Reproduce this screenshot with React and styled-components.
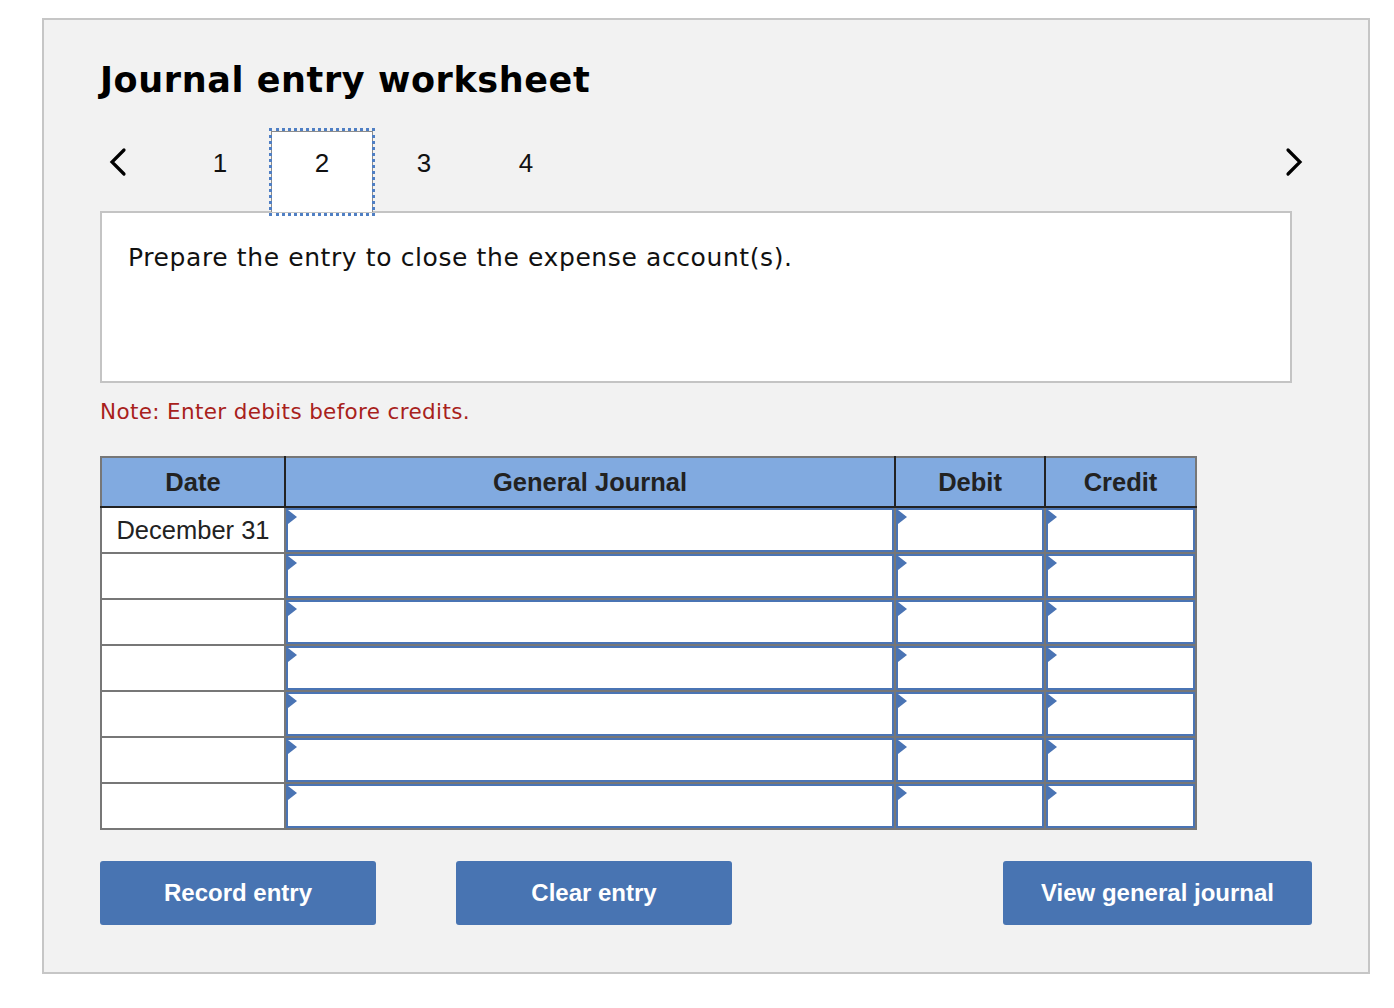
import React from 'react';
import styled, { createGlobalStyle } from 'styled-components';

const GlobalStyle = createGlobalStyle`
  html, body {
    margin: 0;
    padding: 0;
    background: #ffffff;
  }
  body {
    font-family: "DejaVu Sans", Verdana, sans-serif;
  }
`;

const Page = styled.div`
  padding: 18px 0 0 42px;
`;

const Panel = styled.div`
  width: 1328px;
  height: 956px;
  box-sizing: border-box;
  background: #f2f2f2;
  border: 2px solid #c6c6c6;
  padding: 38px 0 0 56px;
`;

const Title = styled.h1`
  margin: 0;
  font-family: "DejaVu Sans", Verdana, sans-serif;
  font-weight: bold;
  font-size: 35px;
  line-height: 44px;
  color: #000;
  letter-spacing: 0.6px;
`;

const TabBar = styled.div`
  display: flex;
  align-items: flex-end;
  width: 1212px;
  height: 82px;
  margin-top: 27px;
`;

const Arrow = styled.button`
  border: none;
  background: none;
  padding: 0 0 18px;
  width: 36px;
  height: 80px;
  display: flex;
  align-items: center;
  justify-content: center;
  margin-left: ${(p) => (p.$right ? 'auto' : '0')};
  cursor: pointer;
`;

const Tabs = styled.div`
  display: flex;
  margin-left: 33px;
`;

const Tab = styled.div`
  position: relative;
  width: 102px;
  height: 81px;
  box-sizing: border-box;
  display: flex;
  align-items: center;
  justify-content: center;
  font-family: "Liberation Sans", Arial, sans-serif;
  font-size: 26px;
  color: #111;
  background: ${(p) => (p.$active ? '#ffffff' : 'transparent')};
  border: 1px solid ${(p) => (p.$active ? '#8c8c8c' : 'transparent')};
  border-bottom: none;
  margin-bottom: -1px;
  padding-bottom: 18px;
  z-index: 1;
  &::after {
    content: '';
    display: ${(p) => (p.$active ? 'block' : 'none')};
    position: absolute;
    left: -3px;
    right: -3px;
    top: -4px;
    bottom: -4px;
    border: 3px dotted #4f7fc4;
  }
`;

const Prompt = styled.div`
  width: 1192px;
  height: 172px;
  box-sizing: border-box;
  background: #fff;
  border: 2px solid #c4c4c4;
  padding: 28px 26px;
  font-size: 25px;
  letter-spacing: 0.6px;
  color: #111;
  line-height: 34px;
`;

const Note = styled.p`
  margin: 14px 0 0;
  font-size: 21.5px;
  letter-spacing: 0.35px;
  line-height: 30px;
  color: #a8211b;
`;

const Table = styled.table`
  margin-top: 29px;
  border-collapse: collapse;
  table-layout: fixed;
  width: 1096px;
  font-family: "Liberation Sans", Arial, sans-serif;
`;

const Th = styled.th`
  width: ${(p) => p.$w}px;
  height: 48px;
  padding: 0;
  background: #81aae0;
  font-size: 25.5px;
  font-weight: bold;
  color: #222;
  border-top: 2px solid #777;
  border-left: 2px solid ${(p) => (p.$first ? '#777' : '#222')};
  border-right: 2px solid ${(p) => (p.$last ? '#777' : '#222')};
  border-bottom: 2px solid #222;
`;

const Td = styled.td`
  height: 44px;
  padding: 0;
  border: 2px solid #777;
  background: #fff;
  vertical-align: top;
`;

const DateCell = styled(Td)`
  font-size: 25.5px;
  color: #222;
  text-align: center;
  vertical-align: middle;
`;

const InputWrap = styled.div`
  position: relative;
  height: 44px;
  box-sizing: border-box;
  border: 2px solid #4a74b4;
  &::before {
    content: '';
    position: absolute;
    left: 0;
    top: 0;
    border-top: 7px solid transparent;
    border-bottom: 7px solid transparent;
    border-left: 9px solid #4a74b4;
  }
`;

const Input = styled.input`
  width: 100%;
  height: 100%;
  box-sizing: border-box;
  border: none;
  outline: none;
  background: transparent;
  font-size: 20px;
  padding: 0 10px;
`;

const Actions = styled.div`
  display: flex;
  width: 1212px;
  margin-top: 31px;
`;

const Button = styled.button`
  width: ${(p) => p.$w}px;
  height: 64px;
  margin-left: ${(p) => p.$ml || 0}px;
  border: none;
  border-radius: 3px;
  background: #4874b2;
  color: #fff;
  font-family: "Liberation Sans", Arial, sans-serif;
  font-weight: bold;
  font-size: 24px;
  cursor: pointer;
`;

const Chevron = ({ dir }) => (
  <svg width="20" height="30" viewBox="0 0 20 30">
    <path
      d={dir === 'left' ? 'M16 3 L4 15 L16 27' : 'M4 3 L16 15 L4 27'}
      fill="none"
      stroke="#000"
      strokeWidth="3.2"
      strokeLinecap="round"
      strokeLinejoin="miter"
    />
  </svg>
);

const rows = ['December 31', '', '', '', '', '', ''];

export default function App() {
  return (
    <Page>
      <GlobalStyle />
      <Panel>
        <Title>Journal entry worksheet</Title>
        <TabBar>
          <Arrow aria-label="previous">
            <Chevron dir="left" />
          </Arrow>
          <Tabs>
            {[1, 2, 3, 4].map((n) => (
              <Tab key={n} $active={n === 2}>
                {n}
              </Tab>
            ))}
          </Tabs>
          <Arrow $right aria-label="next">
            <Chevron dir="right" />
          </Arrow>
        </TabBar>
        <Prompt>Prepare the entry to close the expense account(s).</Prompt>
        <Note>Note: Enter debits before credits.</Note>
        <Table>
          <thead>
            <tr>
              <Th $w={182} $first>Date</Th>
              <Th $w={608}>General Journal</Th>
              <Th $w={148}>Debit</Th>
              <Th $w={149} $last>Credit</Th>
            </tr>
          </thead>
          <tbody>
            {rows.map((date, i) => (
              <tr key={i}>
                <DateCell>{date}</DateCell>
                {[0, 1, 2].map((c) => (
                  <Td key={c}>
                    <InputWrap>
                      <Input />
                    </InputWrap>
                  </Td>
                ))}
              </tr>
            ))}
          </tbody>
        </Table>
        <Actions>
          <Button $w={276}>Record entry</Button>
          <Button $w={276} $ml={80}>Clear entry</Button>
          <Button $w={309} $ml={271}>View general journal</Button>
        </Actions>
      </Panel>
    </Page>
  );
}
